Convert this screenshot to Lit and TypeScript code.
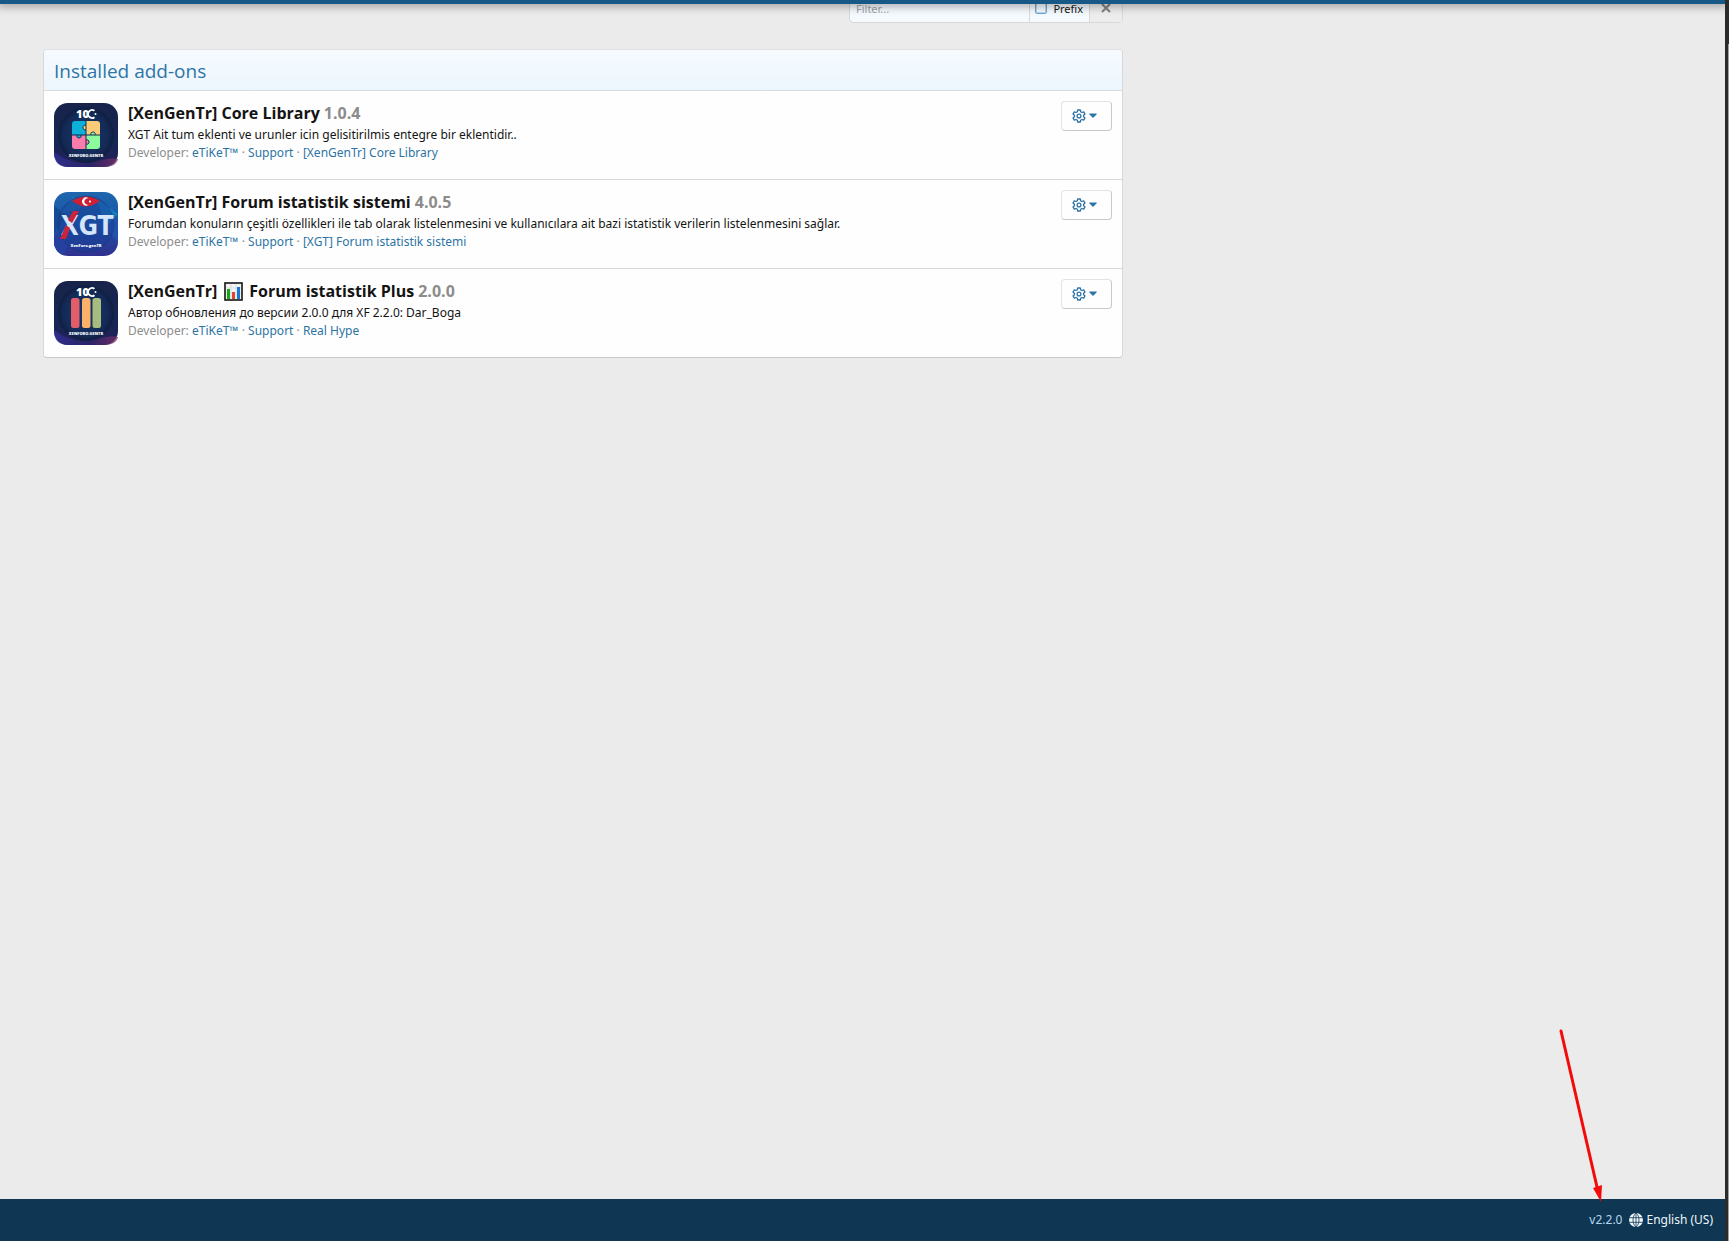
import { LitElement, html, css, svg, nothing } from "lit";
import { customElement, property } from "lit/decorators.js";

type Art = "puzzle" | "xgt" | "bars";

interface AddOn {
  art: Art;
  name: string;
  chart?: boolean;
  suffix?: string;
  version: string;
  description: string;
  homepage: string;
}

const ADD_ONS: AddOn[] = [
  {
    art: "puzzle",
    name: "[XenGenTr] Core Library",
    version: "1.0.4",
    description: "XGT Ait tum eklenti ve urunler icin gelisitirilmis entegre bir eklentidir..",
    homepage: "[XenGenTr] Core Library",
  },
  {
    art: "xgt",
    name: "[XenGenTr] Forum istatistik sistemi",
    version: "4.0.5",
    description:
      "Forumdan konuların çeşitli özellikleri ile tab olarak listelenmesini ve kullanıcılara ait bazi istatistik verilerin listelenmesini sağlar.",
    homepage: "[XGT] Forum istatistik sistemi",
  },
  {
    art: "bars",
    name: "[XenGenTr]",
    chart: true,
    suffix: "Forum istatistik Plus",
    version: "2.0.0",
    description: "Автор обновления до версии 2.0.0 для XF 2.2.0: Dar_Boga",
    homepage: "Real Hype",
  },
];

const centenary = svg`
  <defs>
    <linearGradient id="night" x1="0" y1="0" x2="0" y2="1">
      <stop offset="0" stop-color="#18234a" />
      <stop offset="0.6" stop-color="#142752" />
      <stop offset="1" stop-color="#251f5c" />
    </linearGradient>
    <linearGradient id="wave" x1="0" y1="0" x2="1" y2="0">
      <stop offset="0" stop-color="#33319c" />
      <stop offset="0.55" stop-color="#2a2568" />
      <stop offset="1" stop-color="#7c3069" />
    </linearGradient>
    <radialGradient id="disc">
      <stop offset="0" stop-color="#17386a" />
      <stop offset="0.8" stop-color="#142a56" />
      <stop offset="1" stop-color="#0f1d40" />
    </radialGradient>
  </defs>
  <rect width="64" height="64" rx="14" fill="url(#night)" />
  <path d="M0 49 C10 57 24 61 34 60 C46 59 54 53 64 56 C63 61 58 64 50 64 L14 64 C5 64 0 59 0 50 Z" fill="url(#wave)" opacity="0.75" />
  <circle cx="32" cy="32" r="28" fill="url(#disc)" />
  <text x="22" y="15" class="hundred">10</text>
  <path d="M40.500 7.800 A4 4 0 1 0 40.500 14.200" fill="none" stroke="#fff" stroke-width="1.800" />
  <circle cx="41.500" cy="11" r="1" fill="#fff" />`;

const artwork: Record<Art, unknown> = {
  puzzle: svg`
    ${centenary}
    <path d="M21 18 H32 V32 H18 V21 Q18 18 21 18 Z" fill="#0db0d8" />
    <path d="M32 18 H43 Q46 18 46 21 V32 H32 Z" fill="#fccb78" />
    <path d="M18 32 H32 V46 H21 Q18 46 18 43 Z" fill="#fb7cab" />
    <path d="M32 32 H46 V43 Q46 46 43 46 H32 Z" fill="#8cfb9e" />
    <path d="M32 22.5 C28 21 28 28 32 26.5 Z" fill="#fccb78" stroke="#14284f" />
    <path d="M23 32 C21.500 36 28.500 36 27 32 Z" fill="#0db0d8" stroke="#14284f" />
    <path d="M32 37 C36 35.500 36 42.500 32 41 Z" fill="#fb7cab" stroke="#14284f" />
    <path d="M37 32 C35.500 28 42.500 28 41 32 Z" fill="#8cfb9e" stroke="#14284f" />
    <path d="M32 18 V22.500 M32 26.500 V37 M32 41 V46 M18 32 H23 M27 32 H37 M41 32 H46" stroke="#14284f" />
    <text x="32" y="54" class="caption">XENFORO.GENTR</text>`,
  xgt: svg`
    <defs>
      <linearGradient id="sea" x1="0" y1="0" x2="0" y2="1">
        <stop offset="0" stop-color="#1e66ad" />
        <stop offset="0.5" stop-color="#1c54a6" />
        <stop offset="1" stop-color="#30308f" />
      </linearGradient>
      <clipPath id="tile"><rect width="64" height="64" rx="14" /></clipPath>
    </defs>
    <g clip-path="url(#tile)">
      <rect width="64" height="64" fill="url(#sea)" />
      <path d="M0 14 L14 24 L0 40 Z" fill="#174a93" />
      <path d="M42 6 L64 22 L52 34 Z" fill="#148bc7" opacity="0.7" />
      <path d="M0 44 L18 40 L10 64 L0 64 Z" fill="#27409f" />
      <path d="M52 36 L64 26 V50 Z" fill="#2450ae" />
      <path d="M20 4 L6 22 L28 16 Z" fill="#2477bb" opacity="0.6" />
      <circle cx="32" cy="32" r="28" fill="#183f94" opacity="0.5" stroke="#143274" />
    </g>
    <path d="M18 9 Q32 0 46 9 L41 12 Q32 17 23 12 Z" fill="#cf1f35" />
    <path d="M34.500 6.300 A4 4 0 1 0 34.500 12.700 A3.300 3.300 0 1 1 34.500 6.300 Z" fill="#fff" />
    <circle cx="36" cy="9.500" r="1.100" fill="#fff" />
    <text x="33" y="43" class="mark">XGT</text>
    <path d="M19 19 H25 L18 31 L14 28 Z" fill="#cb2339" />
    <path d="M12 33 L16 36 L12 47 H6 Z" fill="#cb2339" />
    <text x="32" y="55" class="caption">XenForo.genTR</text>`,
  bars: svg`
    ${centenary}
    <rect x="17" y="17" width="8.500" height="30" rx="2.500" fill="#e15e69" />
    <rect x="28" y="17" width="8.500" height="30" rx="2.500" fill="#fbb16a" />
    <rect x="38.500" y="17" width="8.500" height="30" rx="2.500" fill="#a7bd7f" />
    <text x="32" y="54" class="caption">XENFORO.GENTR</text>`,
};

@customElement("addon-art")
class AddonArt extends LitElement {
  @property() kind: Art = "puzzle";

  static styles = css`
    :host { display: block; flex: none; width: 64px; height: 64px; }
    svg { display: block; width: 100%; height: 100%; }
    text { fill: #fff; font-family: "Open Sans", sans-serif; font-weight: 800; }
    .hundred { font-size: 11px; }
    .caption { font-size: 4px; text-anchor: middle; }
    .mark { fill: #d5e5fa; font-family: "Liberation Sans Narrow", "DejaVu Sans Condensed", sans-serif; font-size: 26px; text-anchor: middle; font-weight: 700; }
  `;

  render() {
    return html`<svg viewBox="0 0 64 64" aria-hidden="true">${artwork[this.kind]}</svg>`;
  }
}

@customElement("addon-row")
class AddonRow extends LitElement {
  @property({ attribute: false }) addon!: AddOn;

  static styles = css`
    :host { display: flex; gap: 10px; padding: 12px 10px; }
    .text { flex: 1; min-width: 0; display: flex; flex-direction: column; }
    h3 { display: flex; align-items: center; gap: 4px; margin: 0 0 3px; color: #141414; font-size: 16px; line-height: 20px; font-weight: 700; }
    .version { color: #8c8c8c; }
    .chart { width: 19px; height: 19px; margin: 0 2px 0 3px; }
    p { margin: 0; color: #141414; font-family: "Noto Sans", sans-serif; font-size: 12px; line-height: 18px; }
    .meta { color: #8c8c8c; }
    a { color: #2d74a5; text-decoration: none; }
    button {
      display: flex; align-items: center; justify-content: center; gap: 3px; flex: none;
      width: 51px; height: 30px; margin-top: -2px; padding: 0 4px 0 0;
      background: #fefefe; border: 1px solid; border-color: #e3e3e3 #c9c9c9 #c9c9c9 #e3e3e3; border-radius: 4px;
    }
    .gear { width: 14px; height: 14px; }
    .caret { width: 8px; height: 14px; }
  `;

  render() {
    const a = this.addon;
    return html`
      <addon-art .kind=${a.art}></addon-art>
      <div class="text">
        <h3>
          <span>${a.name}</span>
          ${a.chart
            ? html`<svg class="chart" viewBox="0 0 19 19" role="img" aria-label="Bar chart">
                <rect x="1" y="1" width="17" height="17" fill="#f4f4f4" stroke="#141414" stroke-width="1.600" />
                <path d="M2 6 H17 M2 11 H17 M7 2 V17 M12 2 V17" stroke="#d8dde0" />
                <rect x="3" y="7" width="3" height="10" fill="#16a816" />
                <rect x="8" y="10" width="3" height="7" fill="#e0452f" />
                <rect x="13" y="5" width="3" height="12" fill="#1976d2" />
              </svg>`
            : nothing}
          ${a.suffix ? html`<span>${a.suffix}</span>` : nothing}
          <span class="version">${a.version}</span>
        </h3>
        <p>${a.description}</p>
        <p class="meta">Developer: <a href="#">eTiKeT™</a> · <a href="#">Support</a> · <a href="#">${a.homepage}</a></p>
      </div>
      <button type="button" aria-label="Options">
        <svg class="gear" viewBox="0 0 14 14" fill="none" stroke="#2d74a5" stroke-width="1.300" stroke-linejoin="round">
          <path d="M5.700 1 H8.300 L8.700 2.800 L9.900 3.500 L11.700 2.900 L13 5.100 L11.600 6.300 V7.700 L13 8.900 L11.700 11.100 L9.900 10.500 L8.700 11.200 L8.300 13 H5.700 L5.300 11.200 L4.100 10.500 L2.300 11.100 L1 8.900 L2.400 7.700 V6.300 L1 5.100 L2.300 2.900 L4.100 3.500 L5.300 2.800 Z" />
          <circle cx="7" cy="7" r="1.900" />
        </svg>
        <svg class="caret" viewBox="0 0 8 14"><path d="M0.500 4.500 H7.500 Q8 5 7.500 5.500 L4 9 L0.500 5.500 Q0 5 0.500 4.500 Z" fill="#2d74a5" /></svg>
      </button>
    `;
  }
}

@customElement("app-root")
class AppRoot extends LitElement {
  static styles = css`
    :host {
      display: flex; min-height: 100vh; background: #2b2b2b;
      font-family: "Open Sans", "Noto Sans", sans-serif; color: #141414;
    }
    .page { flex: 1; min-width: 0; display: flex; flex-direction: column; background: #ebebeb; }
    .edge { width: 4px; box-sizing: border-box; padding: 44px 0 0 3px; display: flex; }
    .thumb { flex: 1; background: #a0a0a0; }
    .topbar { position: relative; z-index: 1; height: 4px; background: #185886; box-shadow: 0 0 8px 3px rgba(0, 0, 0, 0.3); clip-path: inset(0 0 -14px 0); }
    main { flex: 1; width: 100%; max-width: 1166px; box-sizing: border-box; padding: 0 43px; }
    .filter {
      display: flex; width: 274px; height: 30px; box-sizing: border-box; margin: -11px 0 26px auto;
      border: 1px solid #d8d8d8; border-radius: 4px; overflow: hidden; background: #f5faff;
      font-family: "Noto Sans", sans-serif; font-size: 11px;
    }
    .filter input[type="text"] {
      flex: 1; min-width: 0; padding: 0 6px; border: 0; background: transparent; font: inherit; outline: none;
    }
    .filter input::placeholder { color: #a0a4a8; opacity: 1; }
    .prefix { display: flex; align-items: center; gap: 6px; padding: 0 6px 0 5px; border-left: 1px solid #d8d8d8; }
    .prefix input {
      appearance: none; width: 12px; height: 12px; margin: 0; border: 1px solid #6fa6d0; border-radius: 2px; background: #f5faff;
      box-shadow: inset 0 0 0 1px #b9d6ee;
    }
    .clear { display: flex; align-items: center; justify-content: center; width: 33px; padding: 0; border: 0; border-left: 1px solid #d8d8d8; background: #ededed; }
    .clear svg { width: 10px; height: 10px; }
    .panel {
      background: #fefefe; border: 1px solid; border-color: #dfdfdf #d8d8d8 #c9c9c9; border-radius: 4px; overflow: hidden;
    }
    h2 {
      margin: 0; padding: 9px 10px 7px; color: #2d74a5; font-size: 19px; line-height: 24px; font-weight: 400;
      background: linear-gradient(#f5faff, #edf6fd); border-bottom: 1px solid #d8dde0;
    }
    addon-row + addon-row { border-top: 1px solid #d8d8d8; }
    footer {
      display: flex; align-items: center; justify-content: flex-end; gap: 7px; height: 42px; padding: 0 12px;
      background: #0f3652; color: #edf6fd; font-family: "Noto Sans", sans-serif; font-size: 12px; line-height: 18px;
    }
    footer a { display: flex; align-items: center; gap: 3px; color: inherit; text-decoration: none; }
    .version { color: #b3d6f0; }
    .globe { width: 14px; height: 14px; }
    .arrow { position: absolute; right: 124px; bottom: 38px; width: 48px; height: 176px; }
  `;

  render() {
    return html`
      <div class="page">
        <div class="topbar"></div>
        <main>
          <form class="filter" @submit=${(e: Event) => e.preventDefault()}>
            <input type="text" placeholder="Filter..." aria-label="Filter" />
            <label class="prefix"><input type="checkbox" />Prefix</label>
            <button class="clear" type="reset" aria-label="Clear">
              <svg viewBox="0 0 10 10"><path d="M1 1 L9 9 M9 1 L1 9" stroke="#848484" stroke-width="2.200" /></svg>
            </button>
          </form>
          <section class="panel">
            <h2>Installed add-ons</h2>
            ${ADD_ONS.map((addon) => html`<addon-row .addon=${addon}></addon-row>`)}
          </section>
        </main>
        <footer>
          <span class="version">v2.2.0</span>
          <a href="#">
            <svg class="globe" viewBox="0 0 14 14">
              <circle cx="7" cy="7" r="7" fill="#edf6fd" />
              <path d="M0 4.700 H14 M0 9.300 H14 M7 0 V14 M7 0 C3 3 3 11 7 14 M7 0 C11 3 11 11 7 14" fill="none" stroke="#0f3652" stroke-width="0.800" />
            </svg>
            English (US)
          </a>
        </footer>
      </div>
      <div class="edge"><div class="thumb"></div></div>
      <svg class="arrow" viewBox="0 0 48 176" aria-hidden="true">
        <path d="M4 4 L40 160" stroke="#f50a0a" stroke-width="3" stroke-linecap="round" />
        <path d="M36 161 L45 158 L44 175 Z" fill="#f50a0a" />
      </svg>
    `;
  }
}
